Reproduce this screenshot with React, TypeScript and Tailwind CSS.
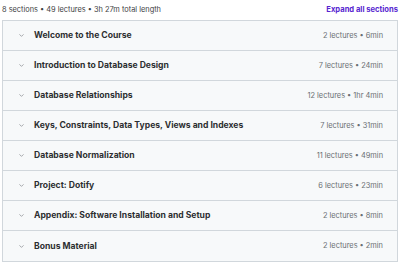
import { ChevronDown } from 'lucide-react'

const sections = [
  { title: 'Welcome to the Course', meta: '2 lectures • 6min' },
  { title: 'Introduction to Database Design', meta: '7 lectures • 24min' },
  { title: 'Database Relationships', meta: '12 lectures • 1hr 4min' },
  { title: 'Keys, Constraints, Data Types, Views and Indexes', meta: '7 lectures • 31min' },
  { title: 'Database Normalization', meta: '11 lectures • 49min' },
  { title: 'Project: Dotify', meta: '6 lectures • 23min' },
  { title: 'Appendix: Software Installation and Setup', meta: '2 lectures • 8min' },
  { title: 'Bonus Material', meta: '2 lectures • 2min' },
]

export default function App() {
  return (
    <div className="w-[400px] h-[262px] bg-white font-['Inter',sans-serif] overflow-hidden">
      <div className="flex items-center justify-between h-[20px] pl-[2px] pr-[2px]">
        <span className="text-[7.4px] text-[#3e4143]">8 sections • 49 lectures • 3h 27m total length</span>
        <button className="text-[7.6px] font-bold text-[#5624d0]">Expand all sections</button>
      </div>
      <div className="mx-[2px] border border-[#d1d7dc]">
        {sections.map((s) => (
          <div
            key={s.title}
            className="flex items-center h-[30px] bg-[#f7f9fa] border-b border-[#d1d7dc] last:border-b-0 pl-[15px] pr-[14px]"
          >
            <ChevronDown className="size-[7px] text-[#6a6f73] mr-[9px]" strokeWidth={2} />
            <span className="flex-1 text-[8.6px] font-bold text-[#2d2f31]">{s.title}</span>
            <span className="text-[7.4px] text-[#6a6f73]">{s.meta}</span>
          </div>
        ))}
      </div>
    </div>
  )
}
